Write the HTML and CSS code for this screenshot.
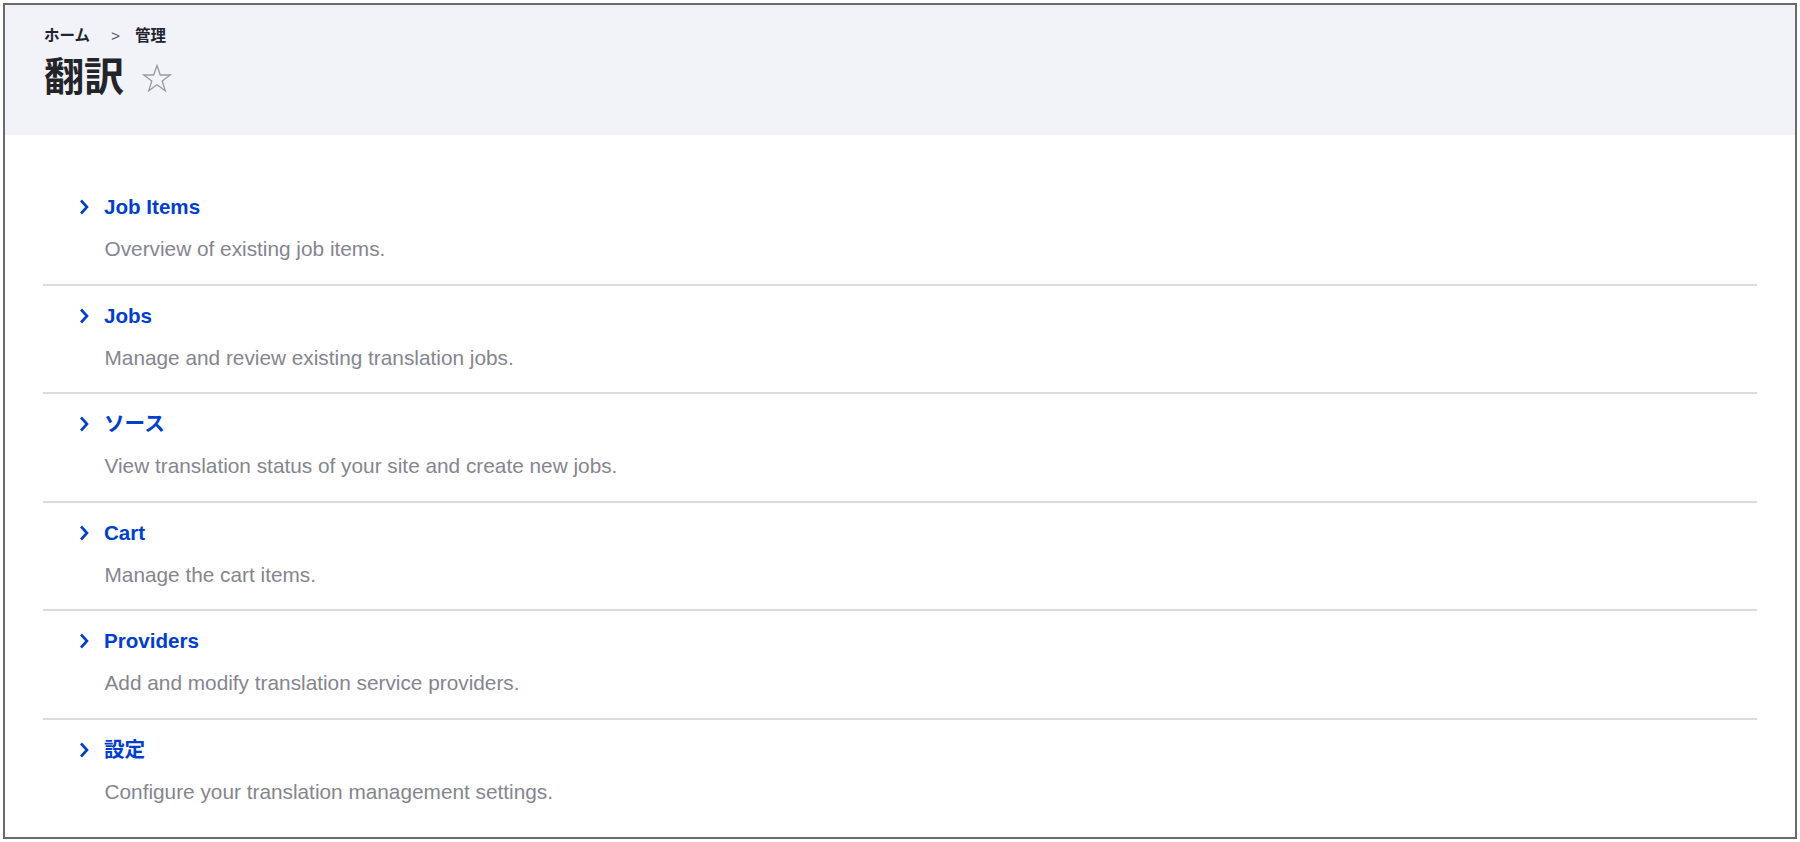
FILE: index.html
```html
<!doctype html>
<html lang="ja">
<head>
    <meta charset="UTF-8">
    <title>翻訳</title>
    <link rel="stylesheet" href="styles.css">
</head>
<body>

<div class="page">
    <div class="header">
        <div class="breadcrumb">
            <span>ホーム</span>
            <span class="sep">&gt;</span>
            <span>管理</span>
        </div>
        <h1 class="title">翻訳
            <svg class="star" width="30" height="29" viewBox="0 0 30 29">
                <polygon points="15,1.5 18.3,11 28.3,11 20.2,17 23.3,26.8 15,20.8 6.7,26.8 9.8,17 1.7,11 11.7,11"
                         fill="none" stroke="#9a9a9e" stroke-width="1.3" stroke-linejoin="miter"/>
            </svg>
        </h1>
    </div>

    <ul class="menu">
        <li class="item">
            <a class="link" href="#"><svg class="chev" width="10" height="16" viewBox="0 0 10 16"><path d="M2 1.5 L8 8 L2 14.5" fill="none" stroke="#003ecc" stroke-width="2.6"/></svg>Job Items</a>
            <div class="desc">Overview of existing job items.</div>
        </li>
        <li class="item">
            <a class="link" href="#"><svg class="chev" width="10" height="16" viewBox="0 0 10 16"><path d="M2 1.5 L8 8 L2 14.5" fill="none" stroke="#003ecc" stroke-width="2.6"/></svg>Jobs</a>
            <div class="desc">Manage and review existing translation jobs.</div>
        </li>
        <li class="item">
            <a class="link" href="#"><svg class="chev" width="10" height="16" viewBox="0 0 10 16"><path d="M2 1.5 L8 8 L2 14.5" fill="none" stroke="#003ecc" stroke-width="2.6"/></svg>ソース</a>
            <div class="desc">View translation status of your site and create new jobs.</div>
        </li>
        <li class="item">
            <a class="link" href="#"><svg class="chev" width="10" height="16" viewBox="0 0 10 16"><path d="M2 1.5 L8 8 L2 14.5" fill="none" stroke="#003ecc" stroke-width="2.6"/></svg>Cart</a>
            <div class="desc">Manage the cart items.</div>
        </li>
        <li class="item">
            <a class="link" href="#"><svg class="chev" width="10" height="16" viewBox="0 0 10 16"><path d="M2 1.5 L8 8 L2 14.5" fill="none" stroke="#003ecc" stroke-width="2.6"/></svg>Providers</a>
            <div class="desc">Add and modify translation service providers.</div>
        </li>
        <li class="item">
            <a class="link" href="#"><svg class="chev" width="10" height="16" viewBox="0 0 10 16"><path d="M2 1.5 L8 8 L2 14.5" fill="none" stroke="#003ecc" stroke-width="2.6"/></svg>設定</a>
            <div class="desc">Configure your translation management settings.</div>
        </li>
    </ul>
</div>

</body>
</html>
```

FILE: styles.css
```css
html, body {
    height: 100%;
}
body {
    margin: 0;
    background: #fff;
    font-family: "Liberation Sans", "Noto Sans CJK JP", sans-serif;
    color: #232429;
}

.page {
    box-sizing: border-box;
    height: calc(100% - 6px);
    margin: 3px;
    border: 2px solid #6b6b6b;
    overflow: hidden;
}

.header {
    height: 130px;
    box-sizing: border-box;
    background: #f2f3f8;
    padding: 20px 0 0 39px;
}
.breadcrumb {
    font-size: 15.5px;
    line-height: 21px;
    font-weight: bold;
    color: #222330;
    display: flex;
}
.breadcrumb .sep {
    font-weight: normal;
    color: #55565e;
    margin: 0 15px 0 21px;
}
.title {
    margin: 7px 0 0 0;
    font-size: 40px;
    line-height: 48px;
    font-weight: bold;
    display: flex;
    align-items: center;
}
.star {
    margin-left: 18px;
    margin-top: 2px;
}

.menu {
    list-style: none;
    margin: 0 38px;
    padding: 42px 0 0 0;
}
.item {
    padding: 18px 0 20.5px 36px;
    border-bottom: 2px solid #dcdce0;
}
.item:last-child {
    border-bottom: none;
}
.link {
    display: flex;
    align-items: center;
    gap: 15px;
    font-size: 20.6px;
    line-height: 24px;
    font-weight: bold;
    color: #003ecc;
    text-decoration: none;
}
.chev {
    flex: none;
}
.desc {
    margin: 16px 0 0 25.5px;
    font-size: 20.8px;
    line-height: 28px;
    color: #85858f;
}
```
